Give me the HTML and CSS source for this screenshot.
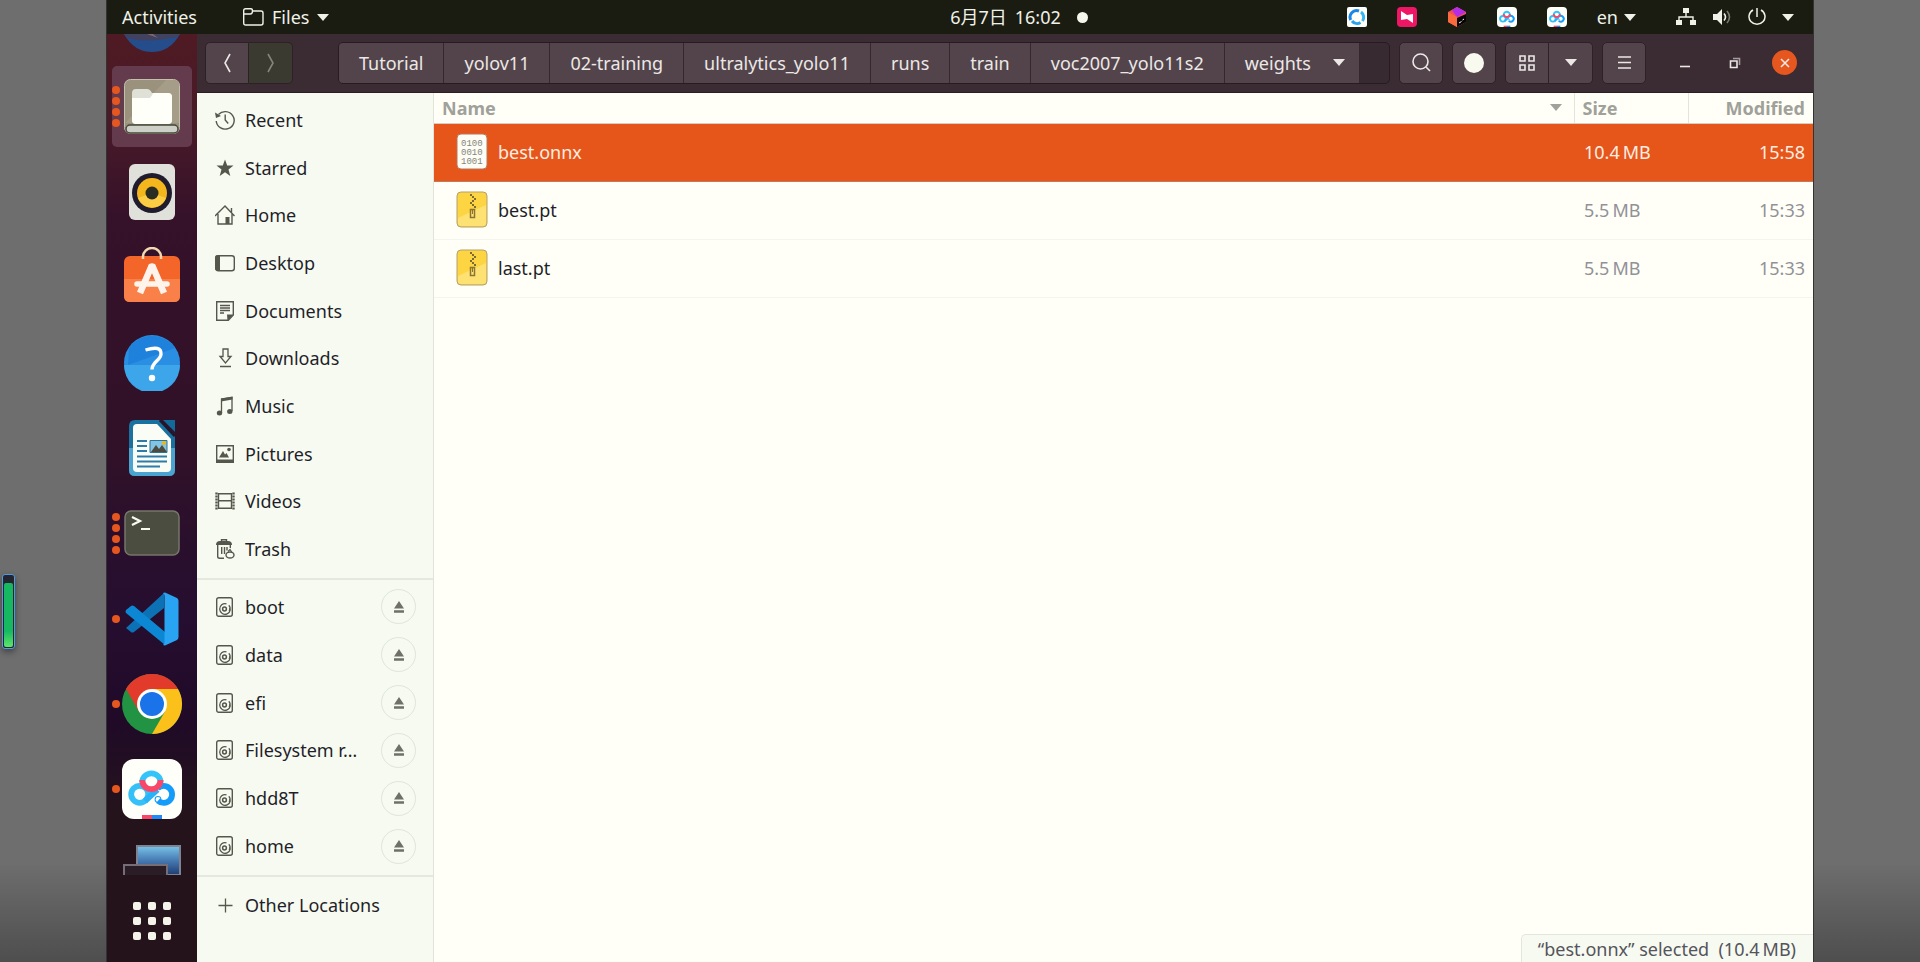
FILE: index.html
```html
<!DOCTYPE html>
<html lang="en">
<head>
  <meta charset="UTF-8" />
  <meta name="viewport" content="width=device-width, initial-scale=1" />
  <title>weights</title>
  <link rel="stylesheet" href="styles.css">
</head>
<body>
  <svg class="sprite" aria-hidden="true">
    <symbol id="disk" viewBox="0 0 20 20">
      <g fill="none" stroke="currentColor"><rect x="1.7" y=".7" width="15.6" height="18.6" rx="2" stroke-width="1.4"/><path d="M13.8 8.300A5.300 5.300 0 1 1 11.500 6.900M14.700 10.500a5.300 5.300 0 0 1-.5 3.500" stroke-width="1.3"/><circle cx="9.500" cy="12" r="1.900" stroke-width="1.500"/></g>
    </symbol>
    <symbol id="eject" viewBox="0 0 12 12"><path d="M6 0 11 7.500H1zM1 9.300h10v2.400H1z" fill="currentColor"/></symbol>
    <symbol id="arrow" viewBox="0 0 12 7"><path d="M0 0h12L6 7z" fill="currentColor"/></symbol>
    <symbol id="cloud" viewBox="0 0 60 60">
      <rect width="60" height="60" rx="12" fill="#fffffa"/>
      <g fill="none" stroke-width="5.800">
        <circle cx="17.700" cy="35.300" r="8.500" stroke="#35c0f8"/>
        <path d="M23 42 35.500 30.500" stroke="#2ab2f8"/>
        <path d="M35.700 29.300a8.500 8.500 0 1 1 .3 12.500" stroke="#149cfb"/>
        <circle cx="36" cy="40.500" r="0.500" stroke="#149cfb"/>
        <path d="M20.200 23.500a9.200 9.200 0 1 1 18.400 0" stroke="#35c4fa"/>
        <path d="M20.200 21a9.200 9.200 0 1 0 18.400 0" stroke="#f8486a"/>
      </g>
      <path d="M20 56h10v4H20z" fill="#f8486a"/><path d="M30 56h10v4H30z" fill="#2389fa"/>
    </symbol>
    <symbol id="archive" viewBox="0 0 32 38">
      <rect x="1" y="1" width="30" height="35" rx="4" fill="#fdd543" stroke="#b3a071"/>
      <path d="M2 27 30 14v18q0 3-3 3H5q-3 0-3-3z" fill="#fee173"/>
      <path d="M14 3h2v2h2v2h2v2h-2v2h-2v2h2v2h2v2h-2v-2h-2v-2h-2v-2h2V9h2V7h-2V5h-2z" fill="#7d6a35"/>
      <rect x="14.500" y="18.500" width="4" height="8" fill="none" stroke="#8a7433" stroke-width="1.500"/><path d="M16.500 18v5" stroke="#8a7433"/>
    </symbol>
  </svg>

  <div class="screen">
    <header class="topbar">
      <div class="topbar-left">
        <button class="top-item" type="button">Activities</button>
        <button class="top-item" type="button">
          <svg width="21" height="18" viewBox="0 0 21 18" fill="none" stroke="currentColor" stroke-width="1.400"><path d="M.7 15V2.500Q.7.700 2.500.700h5.500q1.500 0 1.500 2.300h8.500q2 0 2 2v10q0 2-2 2H2.700q-2 0-2-2zM.7 6h6.500q2.300 0 2.300-3"/></svg>
          Files
          <svg class="caret"><use href="#arrow"/></svg>
        </button>
      </div>
      <button class="top-item clock" type="button"><span>6月7日</span><span>16:02</span><i class="dot"></i></button>
      <div class="topbar-right">
        <div class="tray">
          <svg width="20" height="20" viewBox="0 0 20 20"><rect width="20" height="20" rx="2" fill="#fffffa"/><g fill="none" stroke-width="3"><path d="M3.800 13A6.500 6.500 0 0 1 12 4" stroke="#1a86e8"/><path d="M14 5a6.500 6.500 0 0 1 1.500 9" stroke="#35b5f2"/><path d="M13.500 15.500A6.500 6.500 0 0 1 5 14" stroke="#2aa2ee"/></g></svg>
          <svg width="20" height="20" viewBox="0 0 20 20"><rect width="20" height="20" rx="4" fill="#ee1665"/><path d="m4 4 6 4 6-1v9l-6-4-6 1z" fill="#fff"/></svg>
          <svg width="20" height="20" viewBox="0 0 20 20"><path d="M10 0 19 5v10l-9 5-9-5V5z" fill="#f14c5c"/><path d="M10 0 19 5l-9 5-5-7z" fill="#b52ce8"/><path d="m1 5 9 5v10l-9-5z" fill="#fa6a3c"/><path d="m19 7-9 4v9l9-5z" fill="#050505"/><path d="m12 16 2.500-1.500m1-1.500 1.500-1" stroke="#fff"/></svg>
          <svg width="20" height="20"><use href="#cloud"/></svg>
          <svg width="20" height="20"><use href="#cloud"/></svg>
        </div>
        <button class="top-item lang" type="button">en <svg class="caret"><use href="#arrow"/></svg></button>
        <button class="top-item system" type="button" aria-label="System menu">
          <svg width="20" height="18" viewBox="0 0 20 18" fill="currentColor"><path d="M7 0h6v5H7zM0 12h6v5H0zM14 12h6v5h-6z"/><path d="M10 5v4M3 12V9h14v3" fill="none" stroke="currentColor" stroke-width="1.400"/></svg>
          <svg width="20" height="18" viewBox="0 0 20 18"><path d="M1 6h4l5-5v16l-5-5H1z" fill="currentColor"/><path d="M12 5.500q3 3.500 0 7" fill="none" stroke="currentColor" stroke-width="1.600"/><path d="M15 3q5 6 0 12" fill="none" stroke="#777a70" stroke-width="1.600"/></svg>
          <svg width="18" height="18" viewBox="0 0 18 18" fill="none" stroke="currentColor" stroke-width="1.500"><path d="M9 0v9M5 2a8 7.600 0 1 0 8 0"/></svg>
          <svg class="caret"><use href="#arrow"/></svg>
        </button>
      </div>
    </header>

    <div class="desktop">
      <nav class="dock" aria-label="Dock">
        <div class="dock-list">
          <div class="dock-item first">
            <svg width="56" height="18" viewBox="0 0 56 18"><path d="M0 0h56Q46 18 28 18T0 0z" fill="#254c8b"/><path d="M2 3q15 7 51 0l3-3H0z" fill="#41425f"/><path d="m23 0 11 4-5-4z" fill="#80666f"/></svg>
          </div>
          <div class="dock-item active">
            <span class="dots"><i></i><i></i><i></i><i></i></span>
            <svg width="56" height="56" viewBox="0 0 56 56"><rect x=".5" y=".5" width="55" height="54" rx="6" fill="#9a927d" stroke="#c5bfae"/><path d="M4 41 42 1h8q5 0 5 5v38H1z" fill="#a59d88"/><path d="M8 14q0-4 4-4h11q3 0 5 4h16q4 0 4 4v23q0 4-4 4H12q-4 0-4-4z" fill="#dfe1d7"/><path d="M8 19h17q2 0 4-5h15q4 0 4 4v23q0 4-4 4H12q-4 0-4-4z" fill="#fffffa"/><rect x="2" y="46" width="52" height="8" rx="4" fill="#cdd0c7" stroke="#454839" stroke-width="1.500"/></svg>
          </div>
          <div class="dock-item">
            <svg width="46" height="56" viewBox="0 0 46 56"><rect width="46" height="56" rx="6" fill="#dfe1da"/><circle cx="23" cy="29" r="20" fill="#201c2d"/><circle cx="23" cy="29" r="15" fill="#f3b61c"/><path d="M9 34a15 15 0 0 0 28 0L23 29z" fill="#fbcd45"/><circle cx="23" cy="29" r="6.500" fill="#292c23"/></svg>
          </div>
          <div class="dock-item">
            <svg width="56" height="60" viewBox="0 0 56 60"><rect y="9" width="56" height="46" rx="6" fill="#f4652a"/><path d="M0 49V32h56v17q0 6-6 6H6q-6 0-6-6z" fill="#f98049"/><path d="M19 12v-2a9 9 0 0 1 18 0v2" fill="none" stroke="#f5d9ae" stroke-width="2.500"/><path d="M28 18 16 46M28 18l12 28" stroke="#fff4ec" stroke-width="6.500"/><path d="M13 37h30" stroke="#fff4ec" stroke-width="5.500" stroke-linecap="round"/><circle cx="28" cy="19.500" r="3.200" fill="#fff4ec"/></svg>
          </div>
          <div class="dock-item">
            <svg width="56" height="56" viewBox="0 0 56 56"><circle cx="28" cy="28" r="28" fill="#2a8fe2"/><path d="M0 30h56a28 28 0 0 1-56 0z" fill="#3da5e9"/><path d="M5 13a28 28 0 0 1 46 0L4 30z" fill="#1e81dc"/><path d="M21.500 15q16-5 15.500 4c0 6-9 8-9 15.500" fill="none" stroke="#fff" stroke-width="3.400"/><circle cx="28" cy="43" r="3.200" fill="#fff"/></svg>
          </div>
          <div class="dock-item">
            <svg width="46" height="56" viewBox="0 0 46 56"><path d="M6 0h26l14 14v36q0 6-6 6H6q-6 0-6-6V6q0-6 6-6z" fill="#18719f"/><path d="M0 28h46v22q0 6-6 6H6q-6 0-6-6z" fill="#4ba3cf"/><path d="M34 0h12v12z" fill="#116a9a"/><path d="M31 0 46 16" stroke="#25152a" stroke-width="3"/><path d="M8 4h20l14 15v29q0 4-4 4H8q-4 0-4-4V8q0-4 4-4z" fill="#fafcf6"/><path d="M8 21h10M8 26h10M8 31h10M8 36.500h30M8 41.500h30M8 46.500h23" stroke="#2e7ba8" stroke-width="2"/><path d="M21 20.500h17v12H21z" fill="#83c3e4" stroke="#2c7398"/><path d="m22 32 5-7 3 4 3-4 5 7z" fill="#4b4b40"/><circle cx="35" cy="23" r="2" fill="#ecb90b"/></svg>
          </div>
          <div class="dock-item">
            <span class="dots"><i></i><i></i><i></i><i></i></span>
            <svg width="56" height="46" viewBox="0 0 56 46"><rect x="1" y="1" width="54" height="44" rx="6" fill="#4b4d41" stroke="#77766b" stroke-width="1.500"/><path d="m8 7 8 4-8 4M17 19h9" fill="none" stroke="#fafaf0" stroke-width="2.200"/></svg>
          </div>
          <div class="dock-item">
            <span class="dots"><i></i></span>
            <svg width="54" height="54" viewBox="0 0 54 54"><path d="m1 36 5 4q1 1 3 0L39 16V1z" fill="#0d71b6"/><path d="m1 18 5-4q1-1 3 0l31 26v13L1 21q-1-1 0-3z" fill="#0b87d4"/><path d="M38 53q1.500-1 1.500-3V4Q39.500 2 38 1L40 .5 52 6q1.500 1 1.500 3v36q0 2-1.500 3l-12 5.500z" fill="#28a4f3"/></svg>
          </div>
          <div class="dock-item">
            <span class="dots"><i></i></span>
            <svg width="60" height="60" viewBox="0 0 60 60"><circle cx="30" cy="30" r="30" fill="#229342"/><path d="M30 30 4 15A30 30 0 0 1 56 15z" fill="#e23b2b"/><path d="M30 15h26A30 30 0 0 1 30 60l13-22.500z" fill="#fcc01a"/><path d="M4 15 17 37.500 30 30V15z" fill="#e23b2b"/><circle cx="30" cy="30" r="15" fill="#fffffa"/><circle cx="30" cy="30" r="12" fill="#1a73e8"/></svg>
          </div>
          <div class="dock-item">
            <span class="dots"><i></i></span>
            <svg width="60" height="60"><use href="#cloud"/></svg>
          </div>
          <div class="dock-item last">
            <svg width="58" height="30" viewBox="0 0 58 30"><defs><linearGradient id="sky" x2="0" y2="1"><stop stop-color="#79c3ea"/><stop offset=".5" stop-color="#467ab2"/><stop offset="1" stop-color="#1e3c70"/></linearGradient></defs><path d="M14 1h43v29H14z" fill="url(#sky)" stroke="#7d8390" stroke-width="2"/><path d="M1 30V20h43v10" fill="#2b1d25" stroke="#756d77" stroke-width="2"/></svg>
          </div>
        </div>
        <button class="show-apps" type="button" aria-label="Show Applications"><i></i><i></i><i></i><i></i><i></i><i></i><i></i><i></i><i></i></button>
      </nav>

      <section class="window">
        <div class="headerbar">
          <div class="linked">
            <button class="btn" type="button" aria-label="Back"><svg width="8" height="20" viewBox="0 0 8 20"><path d="M7 1 2 10l5 9"/></svg></button>
            <button class="btn" type="button" aria-label="Forward" disabled><svg width="8" height="20" viewBox="0 0 8 20"><path d="m1 1 5 9-5 9"/></svg></button>
          </div>
          <nav class="pathbar" aria-label="Path">
            <button type="button">Tutorial</button>
            <button type="button">yolov11</button>
            <button type="button">02-training</button>
            <button type="button">ultralytics_yolo11</button>
            <button type="button">runs</button>
            <button type="button">train</button>
            <button type="button">voc2007_yolo11s2</button>
            <button class="current" type="button">weights <svg class="caret"><use href="#arrow"/></svg></button>
          </nav>
          <div class="tools">
            <button class="btn" type="button" aria-label="Search"><svg width="19" height="19" viewBox="0 0 19 19"><circle cx="8.500" cy="8.500" r="7.500"/><path d="m14 14 4 4"/></svg></button>
            <button class="btn" type="button" aria-label="Record"><i class="disc"></i></button>
            <div class="linked">
              <button class="btn" type="button" aria-label="Icon view"><svg width="16" height="16" viewBox="0 0 16 16"><path d="M1 1h5v5H1zM10 1h5v5h-5zM1 10h5v5H1zM10 10h5v5h-5z"/></svg></button>
              <button class="btn" type="button" aria-label="View options"><svg class="caret"><use href="#arrow"/></svg></button>
            </div>
            <button class="btn" type="button" aria-label="Menu"><svg width="13" height="13" viewBox="0 0 13 13"><path d="M0 1h13M0 6.500h13M0 12h13"/></svg></button>
          </div>
          <div class="controls">
            <button type="button" aria-label="Minimize"><svg width="12" height="12" viewBox="0 0 12 12"><path d="M1 9.500h10" stroke-width="1.600"/></svg></button>
            <button type="button" aria-label="Restore"><svg width="12" height="12" viewBox="0 0 12 12"><path d="M1.500 4h6.500v6.500H1.500z"/><path d="M4 1.500h6.500V8" opacity=".6"/></svg></button>
            <button class="close" type="button" aria-label="Close"><svg width="12" height="12" viewBox="0 0 12 12"><path d="m2 2 8 8m0-8-8 8"/></svg></button>
          </div>
        </div>

        <div class="content">
          <aside class="sidebar">
            <ul class="places main-places">
              <li><svg viewBox="0 0 20 20"><g fill="none" stroke="currentColor" stroke-width="1.400"><path d="M3.500 4.500a9 8.700 0 1 1-2.300 6.500M10.200 4.500V10l3 3.500"/></g><path d="M0 2.500 1 8l5-2z" fill="currentColor"/></svg><a href="#">Recent</a></li>
              <li><svg viewBox="0 0 20 20"><path d="m10 1.500 2.200 6h6.300l-5 4 1.800 6.500L10 14.200 4.700 18l1.800-6.500-5-4h6.300z" fill="currentColor"/></svg><a href="#">Starred</a></li>
              <li><svg viewBox="0 0 20 20"><path d="M0 11 10 1l9.500 10M3 9v10h14V9M16.500 3v5" fill="none" stroke="currentColor" stroke-width="1.400"/><path d="M10.500 12h4v7h-4z" fill="currentColor"/></svg><a href="#">Home</a></li>
              <li><svg viewBox="0 0 20 20"><rect x=".7" y="2.700" width="18.600" height="15" rx="2.500" fill="none" stroke="currentColor" stroke-width="1.400"/><path d="M3 2h2v16H3q-3 0-3-3V5q0-3 3-3z" fill="currentColor"/></svg><a href="#">Desktop</a></li>
              <li><svg viewBox="0 0 20 20"><path d="M1.700.700h16.600V14l-5 5.300H1.700zM5 4.500h10M5 7h10M5 9.500h10M5 12h4" fill="none" stroke="currentColor" stroke-width="1.400"/><path d="M12 13.500h6.500L12.500 20z" fill="currentColor"/></svg><a href="#">Documents</a></li>
              <li><svg viewBox="0 0 20 20"><path d="M8 1h5v7.500h3L10.500 15 5 8.500h3zM5 18.500h11" fill="none" stroke="currentColor" stroke-width="1.300"/></svg><a href="#">Downloads</a></li>
              <li><svg viewBox="0 0 20 20"><path d="M6.500 17V3L17 1.500V15" fill="none" stroke="currentColor" stroke-width="1.300"/><path d="M6 2.500 17.500.500v3L6 5.500z" fill="currentColor"/><ellipse cx="4.500" cy="17" rx="2.700" ry="2.500" fill="currentColor"/><ellipse cx="14.800" cy="15.500" rx="2.700" ry="2.500" fill="currentColor"/></svg><a href="#">Music</a></li>
              <li><svg viewBox="0 0 20 20"><path d="M1.700 1.700h16.600v16H1.700z" fill="none" stroke="currentColor" stroke-width="1.400"/><path d="M1 15.500h18V19H1zM4 13.500 8 7l2 3.500 1.500-1.500 2.500 4.500z" fill="currentColor"/><circle cx="14" cy="5.500" r="1.800" fill="currentColor"/></svg><a href="#">Pictures</a></li>
              <li><svg viewBox="0 0 20 20"><path d="M3.500 2v16M16.500 2v16M3.500 2.700h13M3.500 9.700h13M3.500 17.300h13" fill="none" stroke="currentColor" stroke-width="1.400"/><path d="M1.500 1.500v17M18.500 1.500v17" stroke="currentColor" stroke-width="2.400" stroke-dasharray="2 1"/></svg><a href="#">Videos</a></li>
              <li><svg viewBox="0 0 20 20"><path d="M2.700 6v11.500q0 1.800 2 1.800H9M15.300 6v3M6.700 8v7M9.500 8v7M12 8v3.500M6.500 3V.7h5V3" fill="none" stroke="currentColor" stroke-width="1.400"/><path d="M1 6q0-4 4-4h8q4 0 4 4z" fill="currentColor"/><ellipse cx="15" cy="16" rx="4" ry="3" fill="none" stroke="currentColor" stroke-width="1.400"/><path d="m13 12.500 2-2 2 3" fill="none" stroke="currentColor" stroke-width="1.200"/></svg><a href="#">Trash</a></li>
            </ul>
            <ul class="places drives">
              <li><svg><use href="#disk"/></svg><a href="#">boot</a><button type="button" aria-label="Unmount boot"><svg><use href="#eject"/></svg></button></li>
              <li><svg><use href="#disk"/></svg><a href="#">data</a><button type="button" aria-label="Unmount data"><svg><use href="#eject"/></svg></button></li>
              <li><svg><use href="#disk"/></svg><a href="#">efi</a><button type="button" aria-label="Unmount efi"><svg><use href="#eject"/></svg></button></li>
              <li><svg><use href="#disk"/></svg><a href="#">Filesystem r…</a><button type="button" aria-label="Unmount filesystem"><svg><use href="#eject"/></svg></button></li>
              <li><svg><use href="#disk"/></svg><a href="#">hdd8T</a><button type="button" aria-label="Unmount hdd8T"><svg><use href="#eject"/></svg></button></li>
              <li><svg><use href="#disk"/></svg><a href="#">home</a><button type="button" aria-label="Unmount home"><svg><use href="#eject"/></svg></button></li>
            </ul>
            <ul class="places other">
              <li><svg viewBox="0 0 20 20"><path d="M10.500 3.500v14M3.500 10.500h14" stroke="currentColor" stroke-width="1.300"/></svg><a href="#">Other Locations</a></li>
            </ul>
          </aside>

          <main class="files">
            <table>
              <thead>
                <tr>
                  <th class="name"><div>Name <svg class="caret"><use href="#arrow"/></svg></div></th>
                  <th class="size">Size</th>
                  <th class="modified">Modified</th>
                </tr>
              </thead>
              <tbody>
                <tr class="selected">
                  <td class="name"><div>
                    <svg viewBox="0 0 32 38"><rect x="1" y="1" width="30" height="35" rx="4" fill="#fdfdf5" stroke="#b9755a"/><g class="bits"><text x="5" y="13">0100</text><text x="5" y="22">0010</text><text x="5" y="31">1001</text></g></svg>
                    best.onnx</div></td>
                  <td class="size">10.4&#8201;MB</td>
                  <td class="modified">15:58</td>
                </tr>
                <tr>
                  <td class="name"><div><svg><use href="#archive"/></svg>best.pt</div></td>
                  <td class="size">5.5&#8201;MB</td>
                  <td class="modified">15:33</td>
                </tr>
                <tr>
                  <td class="name"><div><svg><use href="#archive"/></svg>last.pt</div></td>
                  <td class="size">5.5&#8201;MB</td>
                  <td class="modified">15:33</td>
                </tr>
              </tbody>
            </table>
            <p class="status">“best.onnx” selected&nbsp; (10.4&#8201;MB)</p>
          </main>
        </div>
      </section>
    </div>
  </div>

  <div class="gauge"><i></i></div>
</body>
</html>
```
FILE: styles.css
```css
* {
  box-sizing: border-box;
}
body {
  margin: 0;
  height: 100vh;
  overflow: hidden;
  font-family: 'Noto Sans', 'Noto Sans CJK SC', sans-serif;
  font-size: 18px;
  line-height: 24px;
  color: #1f1f2a;
  background: linear-gradient(#6e6e6e calc(100% - 100px), #4e4e4e);
}
button {
  font: inherit;
  color: inherit;
  background: none;
  border: none;
  padding: 0;
  cursor: pointer;
}
a {
  color: inherit;
  text-decoration: none;
}
svg {
  display: block;
  flex: none;
}
.sprite {
  position: absolute;
  width: 0;
  height: 0;
}
.caret {
  width: 12px;
  height: 7px;
}
.screen {
  display: flex;
  flex-direction: column;
  height: 100%;
  margin: 0 106px;
  border-left: 1px solid #333;
  border-right: 1px solid #333;
}

/* top panel */
.topbar {
  display: grid;
  grid-template-columns: 1fr auto 1fr;
  height: 34px;
  background: #1a1c12;
  color: #f0f1e8;
}
.topbar-left, .topbar-right, .top-item, .tray {
  display: flex;
  align-items: center;
}
.topbar-left {
  gap: 46px;
  padding-left: 15px;
}
.topbar-right {
  justify-content: flex-end;
  padding-right: 19px;
}
.top-item {
  gap: 8px;
}
.clock {
  padding-left: 118px;
}
.dot {
  width: 11px;
  height: 11px;
  margin-left: 8px;
  border-radius: 50%;
  background: #f5f6ec;
}
.tray {
  gap: 30px;
}
.lang {
  gap: 6px;
  margin: 0 40px 0 30px;
}
.system {
  gap: 16px;
}

/* dock */
.desktop {
  display: flex;
  flex: 1;
  min-height: 0;
}
.dock {
  display: flex;
  flex-direction: column;
  width: 90px;
  background: linear-gradient(#4f1a23, #481a28 10%, #35112a 20%, #301128 45%, #260e30 62%, #200a28 74%, #24131b 84%);
}
.dock-list {
  display: grid;
  grid-template-rows: 30px repeat(9, 1fr) 43px;
  flex: 1;
  min-height: 0;
  padding: 0 5px;
}
.dock-item {
  display: grid;
  place-items: center;
  position: relative;
}
.first {
  align-items: start;
}
.last {
  align-items: end;
}
.active {
  background: #643b4c;
  border-radius: 5px;
  margin: 2px 0;
}
.dots {
  position: absolute;
  left: 0;
  display: grid;
  gap: 3px;
}
.dots i {
  width: 8px;
  height: 8px;
  border-radius: 50%;
  background: #e6561f;
}
.show-apps {
  display: grid;
  grid-template-columns: repeat(3, 8px);
  gap: 7px;
  place-content: center;
  height: 87px;
  padding-top: 4px;
}
.show-apps i {
  height: 8px;
  border-radius: 2px;
  background: #f4f4ea;
}

/* file manager */
.window {
  display: flex;
  flex-direction: column;
  flex: 1;
  min-width: 0;
}
.headerbar {
  display: flex;
  align-items: center;
  height: 59px;
  padding: 0 16px 1px 8px;
  background: #3b2b33;
  border-bottom: 1px solid #2a1d24;
  color: #ebe8e6;
}
.headerbar svg:not(.caret) {
  fill: none;
  stroke: currentColor;
  stroke-width: 1.6px;
}
.linked, .tools, .controls {
  display: flex;
}
.btn {
  display: grid;
  place-items: center;
  width: 44px;
  height: 42px;
  background: #53444b;
  border: 1px solid #2e2027;
  border-radius: 5px;
}
.btn:disabled {
  background: #3a3a31;
  color: #85857a;
}
.linked .btn:first-child {
  border-radius: 5px 0 0 5px;
}
.linked .btn:last-child {
  border-left: none;
  border-radius: 0 5px 5px 0;
}
.pathbar {
  display: flex;
  flex: 1;
  height: 42px;
  margin: 0 9px 0 45px;
  overflow: hidden;
  background: #382a31;
  border: 1px solid #271b21;
  border-radius: 5px;
}
.pathbar button {
  padding: 0 20px;
  background: #53444b;
  border-right: 1px solid #35272e;
}
.pathbar .current {
  display: flex;
  align-items: center;
  gap: 22px;
  padding-right: 14px;
}
.tools {
  gap: 9px;
}
.disc {
  width: 20px;
  height: 20px;
  border-radius: 50%;
  background: #f8f9ef;
}
.controls {
  gap: 25px;
  margin-left: 26px;
}
.controls button {
  display: grid;
  place-items: center;
  width: 25px;
  height: 25px;
  border-radius: 50%;
}
.controls .close {
  background: #e6561f;
}
.content {
  display: flex;
  flex: 1;
  min-height: 0;
}
.sidebar {
  width: 237px;
  background: #f7faf0;
  border-right: 1px solid #e2e4dc;
}
.places {
  display: grid;
  grid-auto-rows: 1fr;
  list-style: none;
  margin: 0;
  padding: 3px 0 5px;
}
.main-places {
  height: 485px;
}
.drives {
  height: 297px;
  border-top: 2px solid #e5e8df;
}
.other {
  height: 60px;
  border-top: 2px solid #e5e8df;
}
.places li {
  display: flex;
  align-items: center;
  gap: 10px;
  padding: 0 17px 0 18px;
}
.places svg {
  width: 20px;
  height: 20px;
  color: #55574d;
}
.places a {
  flex: 1;
  white-space: nowrap;
}
.places button {
  display: grid;
  place-items: center;
  width: 35px;
  height: 35px;
  border: 1px solid #e2e4db;
  border-radius: 50%;
}
.places button svg {
  width: 12px;
  height: 12px;
  color: #6f7167;
}
.files {
  display: flex;
  flex-direction: column;
  flex: 1;
  min-width: 0;
  background: #fffff7;
}
table {
  width: 100%;
  border-collapse: collapse;
  table-layout: fixed;
}
th {
  height: 30px;
  padding: 0 8px;
  border-bottom: 1px solid #d8cfc4;
  color: #9fa19a;
  text-align: left;
}
th + th {
  border-left: 1px solid #e3e5dd;
}
.name div {
  display: flex;
  align-items: center;
}
th.name div {
  justify-content: space-between;
}
th.name {
  padding-right: 12px;
}
th.size {
  width: 114px;
}
th.modified {
  width: 125px;
}
.modified {
  text-align: right;
}
td {
  height: 58px;
  padding: 0 8px 0 10px;
  border-bottom: 1px solid #f4f5ec;
  color: #919197;
}
td.name {
  padding-left: 22px;
  color: #1f1f2a;
}
.name div svg:not(.caret) {
  width: 32px;
  height: 38px;
  margin-right: 10px;
}
.bits {
  font: 9px 'Liberation Mono', monospace;
  fill: #84857c;
}
.selected td {
  background: #e6561a;
  border-color: #c1795b;
  color: #fdeee2;
}
.status {
  align-self: flex-end;
  margin: auto 0 0;
  padding: 2px 17px 1px 16px;
  background: #f7faf0;
  border: solid #e4e6de;
  border-width: 1px 0 0 1px;
  border-radius: 5px 0 0 0;
  color: #54545c;
}

/* level gauge docked on the left edge */
.gauge {
  position: absolute;
  left: 2px;
  top: 574px;
  width: 13px;
  height: 75px;
  padding: 8px 1px 1px;
  background: #25252f;
  border: 1px solid #4f9be0;
  border-radius: 3px;
  box-shadow: 0 3px 6px #0006;
}
.gauge i {
  display: block;
  height: 100%;
  border-radius: 2px;
  background: linear-gradient(#16b862 75%, #5ee66a);
}
```
